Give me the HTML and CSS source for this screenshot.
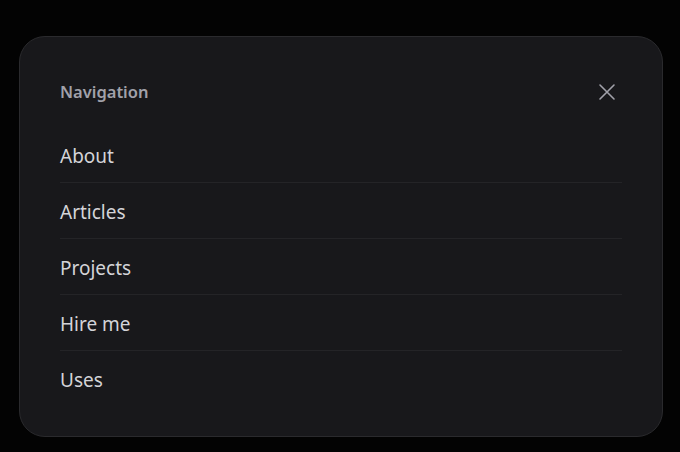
FILE: index.html
```html
<!DOCTYPE html>
<html lang="en">
<head>
<meta charset="utf-8">
<title>Navigation</title>
<link rel="stylesheet" href="styles.css">
</head>
<body>
<div class="panel">
  <div class="header">
    <h2 class="title">Navigation</h2>
    <button class="close" aria-label="Close menu">
      <svg viewBox="0 0 24 24" width="24" height="24" fill="none" stroke="currentColor" stroke-width="1.6" stroke-linecap="round" stroke-linejoin="round"><path d="M5 5l14 14M5 19l14-14"/></svg>
    </button>
  </div>
  <nav class="nav">
    <ul class="list">
      <li><a href="#">About</a></li>
      <li><a href="#">Articles</a></li>
      <li><a href="#">Projects</a></li>
      <li><a href="#">Hire me</a></li>
      <li><a href="#">Uses</a></li>
    </ul>
  </nav>
</div>
</body>
</html>
```
FILE: styles.css
```css
html, body {
  margin: 0;
  height: 100%;
  background: #030303;
}
body {
  padding: 36px 0 0 19px;
  box-sizing: border-box;
  font-family: "Noto Sans", "Open Sans", sans-serif;
}
.panel {
  width: 644px;
  height: 401px;
  box-sizing: border-box;
  background: #18181b;
  border: 1px solid #2a2a2d;
  border-radius: 26px;
  padding: 40px 40px 30px 40px;
}
.header {
  display: flex;
  justify-content: space-between;
  align-items: center;
  height: 30px;
}
.title {
  margin: 0;
  font-size: 16.5px;
  font-weight: 600;
  color: #a1a1aa;
  line-height: 30px;
}
.close {
  background: none;
  border: 0;
  padding: 0;
  margin-right: 3px;
  color: #a1a1aa;
  display: flex;
  cursor: pointer;
}
.nav {
  margin-top: 30px;
}
.list {
  list-style: none;
  margin: -10px 0 0 0;
  padding: 0;
}
.list li + li {
  border-top: 1px solid #242427;
}
.list a {
  display: block;
  padding: 12px 0 8px;
  font-size: 19px;
  line-height: 35px;
  color: #d4d4d8;
  text-decoration: none;
}
```
